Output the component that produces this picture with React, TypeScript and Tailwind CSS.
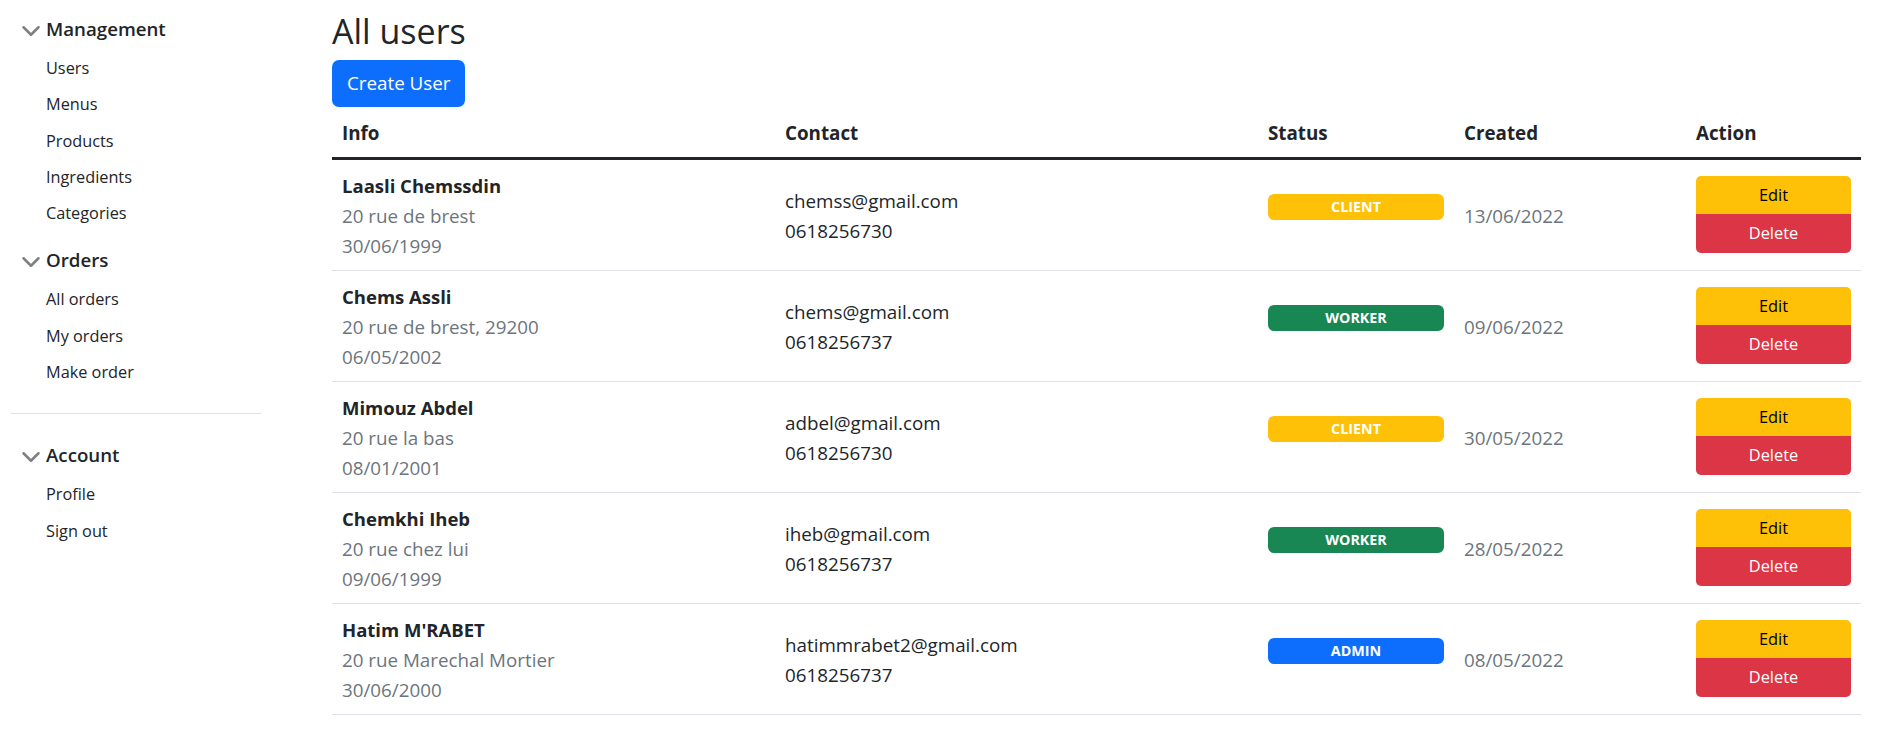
const users = [
  { name: 'Laasli Chemssdin', address: '20 rue de brest', birth: '30/06/1999', email: 'chemss@gmail.com', phone: '0618256730', role: 'CLIENT', created: '13/06/2022' },
  { name: 'Chems Assli', address: '20 rue de brest, 29200', birth: '06/05/2002', email: 'chems@gmail.com', phone: '0618256737', role: 'WORKER', created: '09/06/2022' },
  { name: 'Mimouz Abdel', address: '20 rue la bas', birth: '08/01/2001', email: 'adbel@gmail.com', phone: '0618256730', role: 'CLIENT', created: '30/05/2022' },
  { name: 'Chemkhi Iheb', address: '20 rue chez lui', birth: '09/06/1999', email: 'iheb@gmail.com', phone: '0618256737', role: 'WORKER', created: '28/05/2022' },
  { name: "Hatim M'RABET", address: '20 rue Marechal Mortier', birth: '30/06/2000', email: 'hatimmrabet2@gmail.com', phone: '0618256737', role: 'ADMIN', created: '08/05/2022' },
];

const roleColors: Record<string, string> = {
  CLIENT: 'bg-[#ffc107]',
  WORKER: 'bg-[#198754]',
  ADMIN: 'bg-[#0d6efd]',
};

const menu = [
  { title: 'Management', items: ['Users', 'Menus', 'Products', 'Ingredients', 'Categories'] },
  { title: 'Orders', items: ['All orders', 'My orders', 'Make order'] },
];

function Chevron() {
  return (
    <svg width="20" height="20" viewBox="0 0 16 16" className="shrink-0 translate-y-[2px]">
      <path d="M2 5l6 6 6-6" fill="none" stroke="rgba(0,0,0,.5)" strokeWidth="2" strokeLinecap="round" strokeLinejoin="round" />
    </svg>
  );
}

function Section({ title, items }: { title: string; items: string[] }) {
  return (
    <div>
      <div className="flex items-center h-[38px] pl-[21px] gap-[5px] text-[18.7px] font-semibold text-[#212529]">
        <Chevron />
        <span>{title}</span>
      </div>
      <ul className="mt-[2px]">
        {items.map((item) => (
          <li key={item} className="h-[36.3px] flex items-center pl-[46px] text-[16.3px] text-[#212529]">
            <a href="#">{item}</a>
          </li>
        ))}
      </ul>
    </div>
  );
}

export default function App() {
  return (
    <div className="flex min-h-[736px] bg-white font-['Open_Sans',sans-serif] text-[#212529]">
      {/* Sidebar */}
      <aside className="w-[265px] shrink-0 pt-[10px]">
        <Section title={menu[0].title} items={menu[0].items} />
        <div className="mt-[10px]">
          <Section title={menu[1].title} items={menu[1].items} />
        </div>
        <hr className="ml-[11px] w-[250px] mt-[23px] border-t border-[#dee2e6]" />
        <div className="mt-[22px]">
          <Section title="Account" items={['Profile', 'Sign out']} />
        </div>
      </aside>

      {/* Main */}
      <main className="pl-[67px] flex-1">
        <h2 className="pt-[7px] h-[53px] leading-[48px] text-[34px] font-medium">All users</h2>
        <button className="mt-[7px] h-[47px] px-[15px] rounded-[7px] bg-[#0d6efd] text-white text-[18.8px]">
          Create User
        </button>
        <table className="mt-[3px] w-[1529px] table-fixed border-collapse">
          <colgroup>
            <col className="w-[443px]" />
            <col className="w-[483px]" />
            <col className="w-[196px]" />
            <col className="w-[232px]" />
            <col className="w-[175px]" />
          </colgroup>
          <thead>
            <tr className="border-b-[3px] border-[#212529]">
              {['Info', 'Contact', 'Status', 'Created', 'Action'].map((h) => (
                <th key={h} className="h-[48px] px-[10px] text-left align-middle text-[18.8px] font-bold">
                  {h}
                </th>
              ))}
            </tr>
          </thead>
          <tbody>
            {users.map((u) => (
              <tr key={u.name} className="border-b border-[#dee2e6]">
                <td className="px-[10px] pt-[11px] pb-[9px] align-top text-[18.8px] leading-[30px]">
                  <div className="font-bold text-[18.5px]">{u.name}</div>
                  <div className="text-[#6c757d]">{u.address}</div>
                  <div className="text-[#6c757d]">{u.birth}</div>
                </td>
                <td className="px-[10px] pt-[3px] align-middle text-[18.8px] leading-[30px]">
                  <div>{u.email}</div>
                  <div>{u.phone}</div>
                </td>
                <td className="px-[10px] align-middle">
                  <div className={`${roleColors[u.role]} h-[26px] mb-[16px] rounded-[6px] flex items-center justify-center text-white text-[14.3px] font-bold`}>
                    {u.role}
                  </div>
                </td>
                <td className="px-[10px] pt-[4px] align-middle text-[18.8px] text-[#6c757d]">{u.created}</td>
                <td className="px-[10px] align-middle">
                  <div className="flex flex-col">
                    <button className="h-[38px] rounded-t-[5px] bg-[#ffc107] text-black text-[16.4px]">Edit</button>
                    <button className="h-[39px] rounded-b-[5px] bg-[#dc3545] text-white text-[16.4px]">Delete</button>
                  </div>
                </td>
              </tr>
            ))}
          </tbody>
        </table>
      </main>
    </div>
  );
}
